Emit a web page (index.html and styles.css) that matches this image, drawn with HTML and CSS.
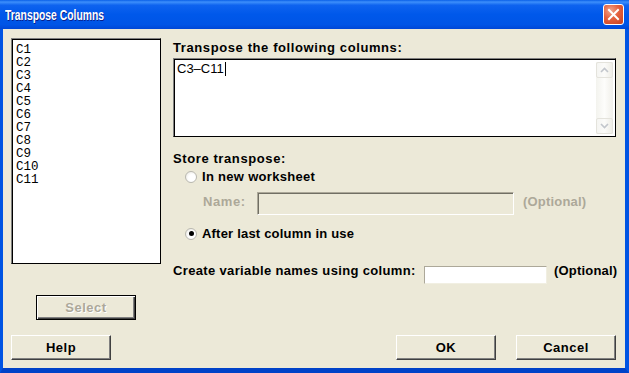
FILE: index.html
```html
<!DOCTYPE html>
<html lang="en">
<head>
  <meta charset="UTF-8">
  <title>Transpose Columns</title>
  <link rel="stylesheet" href="styles.css">
</head>
<body>
  <div class="window">
    <div class="titlebar">
      <span class="title">Transpose Columns</span>
      <span class="close">
        <svg width="21" height="21" viewBox="0 0 21 21">
          <path d="M6 6 L15 15 M15 6 L6 15" stroke="#fff" stroke-width="2" stroke-linecap="square"/>
        </svg>
      </span>
    </div>
    <div class="body">
      <div class="main">
        <div class="left">
          <div class="listbox">
            <div>C1</div>
            <div>C2</div>
            <div>C3</div>
            <div>C4</div>
            <div>C5</div>
            <div>C6</div>
            <div>C7</div>
            <div>C8</div>
            <div>C9</div>
            <div>C10</div>
            <div>C11</div>
          </div>
          <button class="btn btn-select" disabled>Select</button>
        </div>
        <div class="right">
          <div class="label">Transpose the following columns:</div>
          <div class="textarea">
            <div class="text">C3–C11<span class="caret"></span></div>
            <div class="vscroll">
              <span class="sbtn">
                <svg width="9" height="6" viewBox="0 0 9 6"><path d="M1 5 L4.5 1.5 L8 5" fill="none" stroke="#c2c6cc" stroke-width="1.6"/></svg>
              </span>
              <span class="track"></span>
              <span class="sbtn">
                <svg width="9" height="6" viewBox="0 0 9 6"><path d="M1 1 L4.5 4.5 L8 1" fill="none" stroke="#c2c6cc" stroke-width="1.6"/></svg>
              </span>
            </div>
          </div>
          <div class="label store">Store transpose:</div>
          <div class="radio-row first"><span class="radio"></span>In new worksheet</div>
          <div class="name-row">
            <span class="dim name">Name:</span>
            <span class="field disabled"></span>
            <span class="dim opt">(Optional)</span>
          </div>
          <div class="radio-row second"><span class="radio checked"></span>After last column in use</div>
          <div class="create-row">
            <span class="create">Create variable names using column:</span>
            <span class="field small"></span>
            <span class="opt">(Optional)</span>
          </div>
        </div>
      </div>
      <div class="buttons">
        <button class="btn">Help</button>
        <span class="spacer"></span>
        <button class="btn">OK</button>
        <button class="btn">Cancel</button>
      </div>
    </div>
  </div>
</body>
</html>
```

FILE: styles.css
```css
body {
  margin: 0;
  font-family: "Liberation Sans", Arial, sans-serif;
  font-size: 13px;
  background: #ece9d8;
}
.window {
  width: 629px;
  height: 373px;
  display: flex;
  flex-direction: column;
}
.titlebar {
  height: 29px;
  display: flex;
  align-items: center;
  padding: 0 5px 0 5px;
  background: linear-gradient(to bottom, #0a60e8 0%, #3d8ffb 7%, #0e63ef 18%, #0058ea 50%, #0055e6 85%, #0047d6 100%);
}
.title {
  flex: 1;
  color: #fff;
  font-weight: bold;
  font-size: 14px;
  white-space: nowrap;
  text-shadow: 1px 1px 0 #0a1e8a;
  padding-top: 1px;
  transform: scaleX(0.74);
  transform-origin: left center;
}
.close {
  width: 21px;
  height: 21px;
  box-sizing: border-box;
  border: 1px solid #fff;
  border-radius: 3px;
  background: radial-gradient(circle at 35% 30%, #f0a58c 0%, #e4603e 45%, #c9411e 100%);
  display: flex;
}
.close svg {
  margin: -1px;
}
.body {
  flex: 1;
  display: flex;
  flex-direction: column;
  border-left: 3px solid #0054e3;
  border-right: 4px solid #0054e3;
  border-bottom: 5px solid #0042c8;
  padding: 9px 9px 0 8px;
  color: #000;
}
.main {
  display: flex;
  gap: 12px;
}
.left {
  width: 150px;
  display: flex;
  flex-direction: column;
}
.listbox {
  height: 226px;
  box-sizing: border-box;
  background: #fff;
  border: 1px solid #000;
  border-color: #808080 #000 #000 #808080;
  box-shadow: inset 1px 1px 0 #000;
  padding: 5px 0 0 4px;
  font-family: "Liberation Mono", monospace;
  font-size: 12.5px;
  line-height: 13px;
}
.btn {
  width: 100px;
  height: 25px;
  box-sizing: border-box;
  background: #ece9d8;
  border: 1px solid;
  border-color: #fff #404040 #404040 #fff;
  box-shadow: inset -1px -1px 0 #808080;
  font-family: "Liberation Sans", Arial, sans-serif;
  font-weight: bold;
  font-size: 13px;
  letter-spacing: 0.5px;
  color: #000;
  padding: 0;
}
.btn-select {
  margin: 31px 0 0 25px;
  border: 1px solid #000;
  box-shadow: inset 1px 1px 0 #fff, inset -1px -1px 0 #404040, inset -2px -2px 0 #808080;
  color: #aca899;
  text-shadow: 1px 1px 0 #fff;
}
.right {
  width: 443px;
  padding-top: 2px;
}
.label, .radio-row, .create, .opt, .name {
  font-weight: bold;
  letter-spacing: 0.6px;
  line-height: 15px;
  white-space: nowrap;
}
.textarea {
  margin-top: 3px;
  height: 79px;
  box-sizing: border-box;
  background: #fff;
  border: 1px solid;
  border-color: #808080 #000 #000 #808080;
  box-shadow: inset 1px 1px 0 #000;
  display: flex;
}
.textarea .text {
  flex: 1;
  padding: 2px 0 0 3px;
  line-height: 15px;
}
.caret {
  display: inline-block;
  width: 1px;
  height: 14px;
  background: #000;
  vertical-align: -3px;
  margin-left: 1px;
}
.vscroll {
  width: 17px;
  margin: 3px 2px 2px 0;
  display: flex;
  flex-direction: column;
  background: linear-gradient(to right, #f3f3ee, #fdfdfb 50%, #f0efe9);
}
.sbtn {
  height: 16px;
  box-sizing: border-box;
  border: 1px solid #e4e3dc;
  border-radius: 2px;
  background: linear-gradient(to right, #f5f5f2, #fbfbf9 50%, #eeede6);
  display: flex;
  align-items: center;
  justify-content: center;
}
.track {
  flex: 1;
}
.store {
  margin-top: 14px;
}
.radio-row {
  display: flex;
  align-items: center;
  padding-left: 12px;
}
.radio-row.first {
  margin-top: 3px;
  letter-spacing: 0.3px;
}
.radio-row.second {
  margin-top: 11px;
  letter-spacing: 0.2px;
}
.radio {
  width: 12px;
  height: 12px;
  box-sizing: border-box;
  border-radius: 50%;
  border: 1px solid #b9b8b0;
  background: radial-gradient(circle at 60% 60%, #fff 40%, #e6e4dc 100%);
  margin-right: 5px;
  display: flex;
  align-items: center;
  justify-content: center;
}
.radio.checked::after {
  content: "";
  width: 5px;
  height: 5px;
  border-radius: 50%;
  background: #000;
}
.name-row {
  display: flex;
  align-items: flex-start;
  margin-top: 8px;
  padding-left: 30px;
}
.dim {
  color: #aca899;
}
.name-row .name {
  width: 54px;
  padding-top: 2px;
}
.opt {
  letter-spacing: 0.2px;
}
.name-row .opt {
  padding: 2px 0 0 9px;
}
.field {
  display: block;
  flex-shrink: 0;
  box-sizing: border-box;
  border: 1px solid;
  border-color: #aca899 #fff #fff #aca899;
  box-shadow: inset 1px 1px 0 #716f64;
}
.field.disabled {
  width: 257px;
  height: 23px;
  background: #ece9d8;
}
.create-row {
  display: flex;
  align-items: flex-start;
  margin-top: 22px;
}
.create {
  width: 251px;
  flex-shrink: 0;
  letter-spacing: 0.35px;
}
.field.small {
  width: 123px;
  height: 18px;
  margin-top: 3px;
  background: #fff;
  border-color: #aca899 #f1efe2 #f1efe2 #aca899;
  box-shadow: none;
}
.create-row .opt {
  padding-left: 7px;
}
.buttons {
  display: flex;
  margin-top: 15px;
  gap: 20px;
}
.spacer {
  flex: 1;
}
```
